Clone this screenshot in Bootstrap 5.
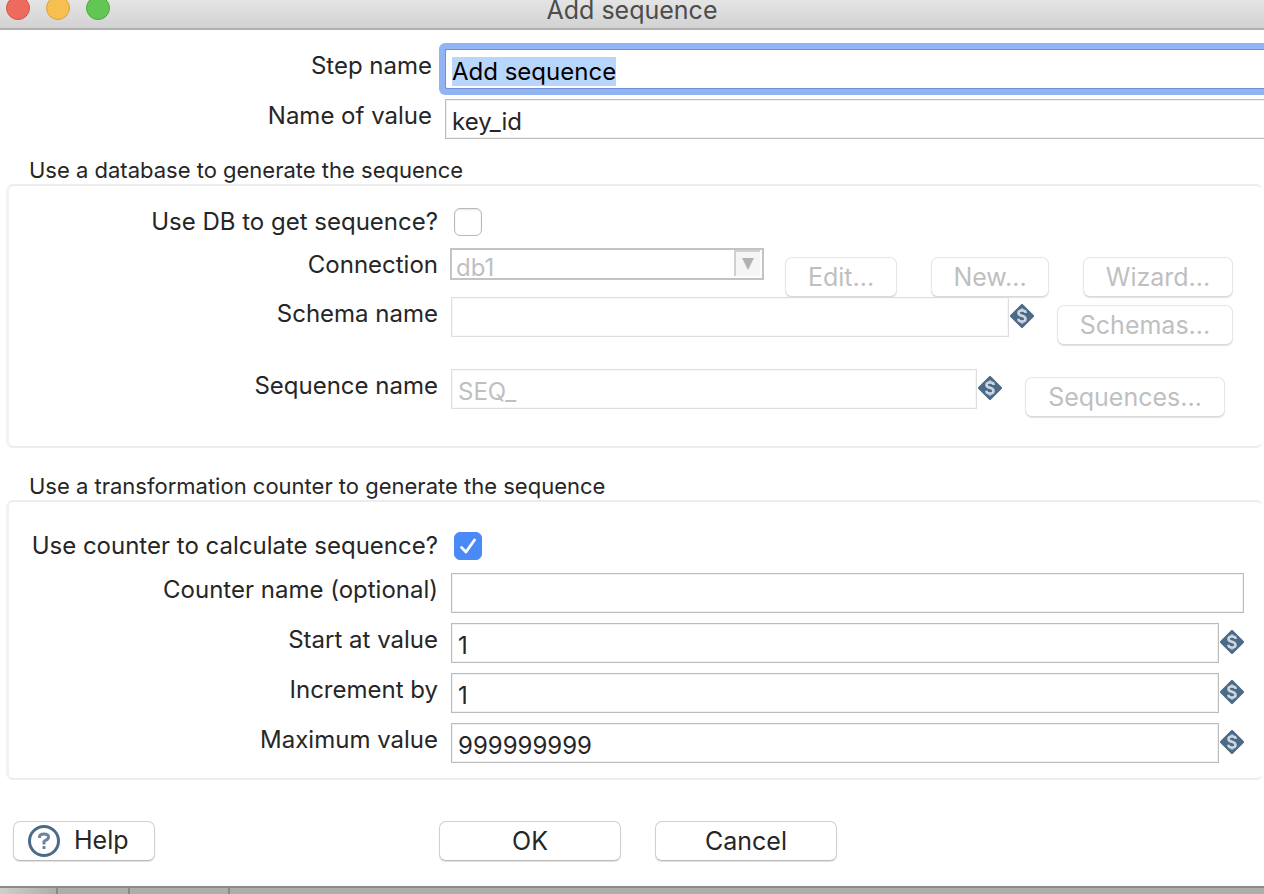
<!DOCTYPE html>
<html lang="en">
<head>
<meta charset="utf-8">
<meta name="viewport" content="width=device-width, initial-scale=1">
<title>Add sequence</title>
<link href="https://cdn.jsdelivr.net/npm/bootstrap@5.3.0/dist/css/bootstrap.min.css" rel="stylesheet">
<style>
  body { font-family: Inter, "Liberation Sans", sans-serif; font-size: 24px; line-height: 32px; color: #262626; background: #fff; overflow-x: hidden; }
  .titlebar { height: 30px; background: linear-gradient(#e4e4e4, #d2d2d2); border-bottom: 2px solid #b0b0b0; color: #4c4c4c; }
  .titlebar h1 { font-size: 25px; line-height: 20px; font-weight: 400; margin-bottom: 8px; }
  .lights { left: 6px; bottom: 8px; }
  .light { width: 24px; height: 24px; border-radius: 50%; border: 1px solid; }
  .light-close { background: #ed6a5e; border-color: #d8534a; }
  .light-min { background: #f6bf50; border-color: #dba13c; }
  .light-max { background: #62c655; border-color: #4da73c; }
  .top-rows { padding: 19px 0 0 8px; row-gap: 10px; }
  .top-rows .field-label { width: 424px; margin-right: 13px; }
  .top-rows .field { border-right: 0; margin-right: -4px; }
  .field-label { flex: none; text-align: right; white-space: nowrap; padding-top: 1px; }
  .field { height: 40px; min-width: 0; padding: 5px 6px 1px; border: 1px solid #bcbcbc; border-radius: 0; font-size: 24px; line-height: 32px; color: #262626; background: #fff; box-shadow: inset 0 0 0 1px #f1f1f1; }
  .field:focus { color: #000; border-color: #7090d0; box-shadow: 0 0 0 6px #91b4f4; border-radius: 2px; background: #fff; outline: 0; }
  .field::selection { background: #b8d6fb; color: #000; }
  .field:disabled { border-color: #dedede; color: #bfbfbf; background: #fff; opacity: 1; box-shadow: inset 0 0 0 1px #f8f8f8; }
  .group-first { margin-top: 17px; }
  .group-title { font-size: 22px; line-height: 28px; font-weight: 400; padding-left: 29px; margin: 0; }
  .group-box { margin: 0 1px 0 6px; border: 2px solid #ececec; border-left: 3px solid #f3f3f3; border-right: 0; border-radius: 7px; }
  .group-box .field-label { width: 429px; margin-right: 13px; }
  .group-db { padding: 22px 30px 29px 0; }
  .group-counter { padding: 30px 19px 15px 0; row-gap: 10px; }
  .tick { width: 28px; height: 28px; margin: 0 0 0 3px; border: 1px solid #b9b9b9; border-radius: 6px !important; box-shadow: inset 0 1px 2px #e4e4e4; }
  .tick:checked { background-color: #4a8af6; border-color: #4a8af6; box-shadow: none;
    background-image: url("data:image/svg+xml,%3csvg xmlns='http://www.w3.org/2000/svg' viewBox='0 0 28 28'%3e%3cpath fill='none' stroke='%23fff' stroke-width='3' stroke-linecap='round' stroke-linejoin='round' d='M7 15.5l4.8 5L21 7.5'/%3e%3c/svg%3e"); }
  .tick-row { line-height: 28px; height: 28px; }
  .tick-row .field-label { padding-top: 0; }
  .group-db .tick-row { margin-bottom: 12px; }
  .group-counter .tick-row { margin-bottom: 3px; }
  .connection-row { min-height: 49px; }
  .combo { width: 314px; height: 32px; margin-left: -1px; }
  .combo select { display: block; height: 32px; width: 100%; padding: 5px 4px 0; border: 2px solid #c3c3c3; border-radius: 0; font-size: 24px; line-height: 26px; color: #bfbfbf; background: #fff; appearance: none; opacity: 1; }
  .combo svg { right: 3px; top: 2px; }
  .push { height: 40px; padding: 0; border: 1px solid #d0d0d0; border-bottom-color: #bcbcbc; border-radius: 7px; background: #fff; color: #262626; font-size: 25px; line-height: 36px; box-shadow: 0 1px 1px #e0e0e0; white-space: nowrap; }
  .push:disabled { opacity: 1; color: #bfbfbf; background: #fff; border-color: #e6e6e6; border-bottom-color: #dadada; }
  .drop { margin-top: 9px; }
  .schema-row .drop, .sequence-row .drop { margin-top: 8px; }
  .var { flex: none; margin: 7px 0 0 1px; }
  .w-edit { width: 112px; } .w-new { width: 118px; } .w-wizard { width: 150px; }
  .w-schemas { width: 176px; } .w-sequences { width: 200px; margin-right: 8px; } .w-main { width: 182px; } .w-help { width: 142px; padding: 0 0 2px 14px; }
  .help-icon { margin: 2px 14px 0 0; }
  .gap-wide { gap: 34px; }
  .ms-var { margin-left: 23px; }
  .footer-bar { padding: 41px 13px 25px; }
  .footer-end { width: 130px; }
  .behind { height: 8px; background: #adadad; border-top: 2px solid #8a8a8a; }
  .behind span { border-right: 2px solid #8a8a8a; }
  .behind span:nth-child(1) { width: 58px; background: linear-gradient(90deg, #cfcfcf, #adadad); }
  .behind span:nth-child(2) { width: 72px; }
  .behind span:nth-child(3) { width: 100px; }
</style>
</head>
<body>
<svg width="0" height="0" class="position-absolute" aria-hidden="true">
  <symbol id="variable" viewBox="0 0 24 24">
    <path d="M12 1.500L22.500 12 12 22.500 1.500 12z" fill="#4b6b88" stroke="#4b6b88" stroke-width="3" stroke-linejoin="round"/>
    <path d="M15.500 9V8.300Q15.500 6.500 12 6.500T8.500 9Q8.500 11 12 11.800T15.500 15Q15.500 17.500 12 17.500T8.500 15.300V14.800M12 4.500V6.500M12 17.500V19.500" fill="none" stroke="#cdd7e0" stroke-width="2.600"/>
  </symbol>
</svg>

<header class="titlebar position-relative d-flex justify-content-center align-items-end">
  <div class="lights position-absolute d-flex gap-3">
    <span class="light light-close"></span><span class="light light-min"></span><span class="light light-max"></span>
  </div>
  <h1>Add sequence</h1>
</header>

<form>
  <div class="top-rows d-flex flex-column">
    <div class="d-flex">
      <label class="field-label" for="step">Step name</label>
      <input class="field form-control flex-fill" id="step" type="text" value="Add sequence" autofocus>
    </div>
    <div class="d-flex">
      <label class="field-label" for="valuename">Name of value</label>
      <input class="field form-control flex-fill" id="valuename" type="text" value="key_id">
    </div>
  </div>

  <section class="group-first" aria-labelledby="db-title">
    <h2 class="group-title" id="db-title">Use a database to generate the sequence</h2>
    <div class="group-box group-db">
      <div class="d-flex tick-row">
        <label class="field-label" for="usedb">Use DB to get sequence?</label>
        <input class="tick form-check-input flex-shrink-0" id="usedb" type="checkbox">
      </div>
      <div class="d-flex connection-row">
        <label class="field-label" for="conn">Connection</label>
        <div class="combo position-relative">
          <select id="conn" disabled><option>db1</option></select>
          <svg class="position-absolute" width="27" height="28" viewBox="0 0 27 28" aria-hidden="true">
            <path fill="#f5f5f5" d="M0 0h26v26H0z"/><path fill="#d0d0d0" d="M0 0h26v2H2v24H0z"/><path fill="#b2b2b2" d="M8 8h12l-6 12z"/>
          </svg>
        </div>
        <div class="d-flex gap-wide ms-auto drop">
          <button class="btn push w-edit" type="button" disabled>Edit...</button>
          <button class="btn push w-new" type="button" disabled>New...</button>
          <button class="btn push w-wizard" type="button" disabled>Wizard...</button>
        </div>
      </div>
      <div class="d-flex schema-row mb-4">
        <label class="field-label" for="schema">Schema name</label>
        <input class="field form-control flex-fill" id="schema" type="text" disabled>
        <svg class="var" width="24" height="24" aria-hidden="true"><use href="#variable"/></svg>
        <div class="drop ms-var d-flex"><button class="btn push w-schemas" type="button" disabled>Schemas...</button></div>
      </div>
      <div class="d-flex sequence-row">
        <label class="field-label" for="seq">Sequence name</label>
        <input class="field form-control flex-fill" id="seq" type="text" value="SEQ_" disabled>
        <svg class="var" width="24" height="24" aria-hidden="true"><use href="#variable"/></svg>
        <div class="drop ms-var d-flex"><button class="btn push w-sequences" type="button" disabled>Sequences...</button></div>
      </div>
    </div>
  </section>

  <section class="mt-4" aria-labelledby="counter-title">
    <h2 class="group-title" id="counter-title">Use a transformation counter to generate the sequence</h2>
    <div class="group-box group-counter d-flex flex-column">
      <div class="d-flex tick-row">
        <label class="field-label" for="usecounter">Use counter to calculate sequence?</label>
        <input class="tick form-check-input flex-shrink-0" id="usecounter" type="checkbox" checked>
      </div>
      <div class="d-flex">
        <label class="field-label" for="counter">Counter name (optional)</label>
        <input class="field form-control flex-fill" id="counter" type="text">
      </div>
      <div class="d-flex">
        <label class="field-label" for="start">Start at value</label>
        <input class="field form-control flex-fill" id="start" type="text" value="1">
        <svg class="var" width="24" height="24" aria-hidden="true"><use href="#variable"/></svg>
      </div>
      <div class="d-flex">
        <label class="field-label" for="incr">Increment by</label>
        <input class="field form-control flex-fill" id="incr" type="text" value="1">
        <svg class="var" width="24" height="24" aria-hidden="true"><use href="#variable"/></svg>
      </div>
      <div class="d-flex">
        <label class="field-label" for="max">Maximum value</label>
        <input class="field form-control flex-fill" id="max" type="text" value="999999999">
        <svg class="var" width="24" height="24" aria-hidden="true"><use href="#variable"/></svg>
      </div>
    </div>
  </section>

  <div class="footer-bar d-flex">
    <button class="btn push w-help d-flex align-items-center" type="button">
      <svg class="help-icon flex-shrink-0" width="32" height="32" viewBox="0 0 32 32" fill="none" stroke="#4b6b88" aria-hidden="true">
        <circle cx="16" cy="16" r="14.500" stroke-width="3"/>
        <path d="M11.500 13V12Q11.500 9 16 9T20.500 12Q20.500 14 18 15.200T16 18V19.500M16 21V24" stroke="#6a859d" stroke-width="3"/>
      </svg>Help</button>
    <div class="d-flex gap-wide flex-fill justify-content-center">
      <button class="btn push w-main" type="submit">OK</button>
      <button class="btn push w-main" type="button">Cancel</button>
    </div>
    <div class="footer-end"></div>
  </div>
</form>
<div class="behind d-flex" aria-hidden="true"><span></span><span></span><span></span></div>

<script src="https://cdn.jsdelivr.net/npm/bootstrap@5.3.0/dist/js/bootstrap.bundle.min.js"></script>
<script>
  const step = document.getElementById('step');
  step.focus();
  step.select();
</script>
</body>
</html>
